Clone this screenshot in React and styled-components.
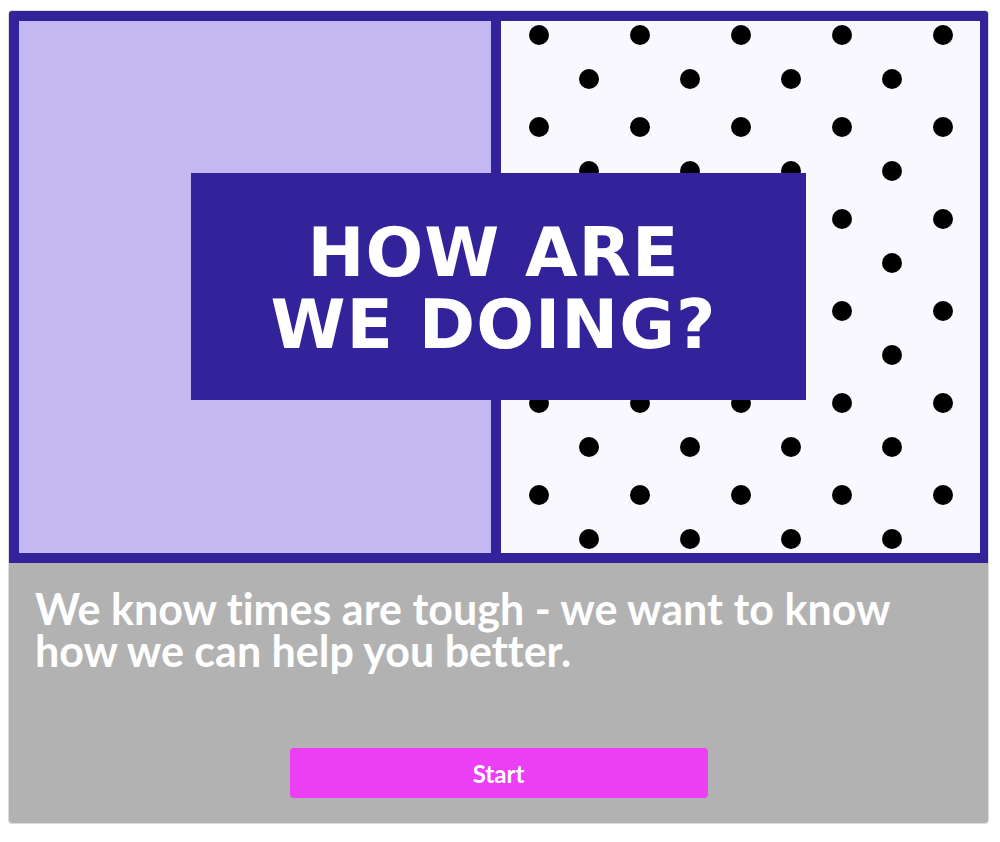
import React from 'react';
import styled, {createGlobalStyle} from 'styled-components';

const Global = createGlobalStyle`
  body {
    margin: 8px;
    background: #fff;
    font-family: Lato, "Noto Sans", sans-serif;
  }
`;

const Card = styled.div`
  box-sizing: border-box;
  width: 981px;
  margin-top: 2px;
  border: 1px solid #dcdcdc;
  border-radius: 4px;
  overflow: hidden;
  background: #b2b2b2;
`;

const Hero = styled.div`
  position: relative;
  display: grid;
  grid-template-columns: 472px 1fr;
  gap: 10px;
  height: 552px;
  box-sizing: border-box;
  padding: 10px 8px 10px 10px;
  background: #33239a;
`;

const Panel = styled.div`
  background: ${({light}) => (light ? '#f9f8fe' : '#c3b8f1')};
  overflow: hidden;
`;

const TitleBox = styled.div`
  position: absolute;
  left: 182px;
  top: 162px;
  width: 615px;
  height: 227px;
  background: #33239a;
  display: flex;
  flex-direction: column;
  align-items: center;
  justify-content: center;
`;

const Title = styled.h1`
  margin: 0;
  color: #fff;
  font-family: "DejaVu Sans", sans-serif;
  font-weight: 700;
  font-size: 68px;
  line-height: 72px;
  letter-spacing: 1px;
  text-align: center;
  padding: 4px 10px 0 0;
`;

const Body = styled.div`
  display: flex;
  flex-direction: column;
  height: 260px;
  box-sizing: border-box;
  padding: 25px 26px 25px 26px;
`;

const Message = styled.p`
  margin: 0;
  flex: 1;
  max-width: 900px;
  color: #fff;
  font-family: Lato, sans-serif;
  font-weight: 700;
  font-size: 43px;
  line-height: 42px;
  font-variant-ligatures: none;
`;

const StartBtn = styled.button`
  align-self: center;
  width: 418px;
  height: 50px;
  border: none;
  border-radius: 4px;
  background: #ec3ef5;
  color: #fff;
  font-family: Lato, sans-serif;
  font-weight: 700;
  font-size: 24px;
  cursor: pointer;
`;

const Dots = () => (
  <svg width="100%" height="100%">
    <defs>
      <pattern id="dots" width="101" height="92" patternUnits="userSpaceOnUse">
        <circle cx="38" cy="14" r="10" fill="#000" />
        <circle cx="88" cy="58" r="10" fill="#000" />
      </pattern>
    </defs>
    <rect width="100%" height="100%" fill="url(#dots)" />
  </svg>
);

export default function App() {
  return (
    <>
      <Global />
      <Card>
        <Hero>
          <Panel />
          <Panel light>
            <Dots />
          </Panel>
          <TitleBox>
            <Title>HOW ARE<br />WE DOING?</Title>
          </TitleBox>
        </Hero>
        <Body>
          <Message>We know times are tough - we want to know how we can help you better.</Message>
          <StartBtn>Start</StartBtn>
        </Body>
      </Card>
    </>
  );
}
